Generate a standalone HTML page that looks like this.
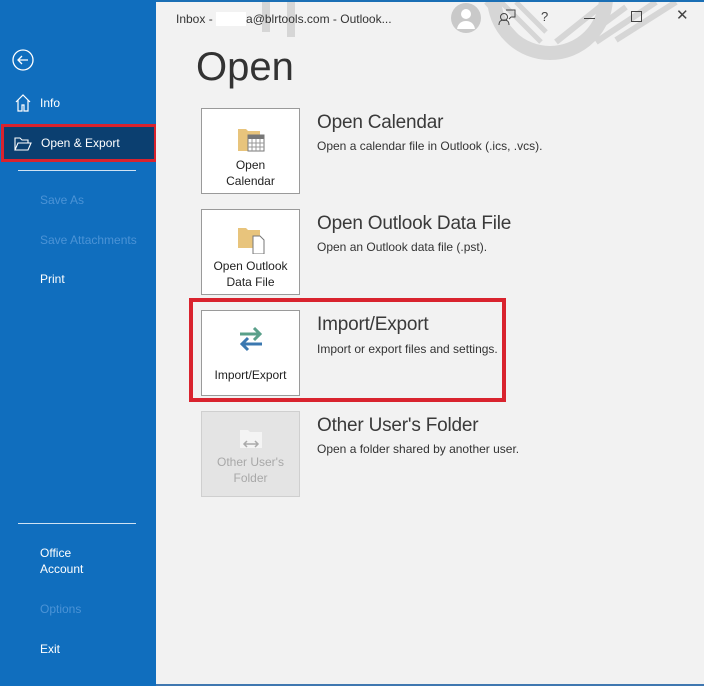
<!DOCTYPE html>
<html><head><style>
body{margin:0;width:704px;height:686px;overflow:hidden;font-family:"Liberation Sans",sans-serif;background:#f2f2f2;position:relative}
.side{position:absolute;left:0;top:0;width:156px;height:686px;background:#106ebe;color:#fff;font-size:12px}
.side div{position:absolute}
.main{position:absolute;left:156px;top:0;right:0;bottom:0;background:#f2f2f2;border-top:2px solid #1a6fb5;border-bottom:2px solid #3f77b0}
.tile{position:absolute;left:201px;width:97px;height:84px;background:#fff;border:1px solid #9a9a9a;font-size:12px;text-align:center;color:#222;line-height:16px}
.t{position:absolute;left:317px;font-size:19px;color:#3a3a3a;font-weight:300;letter-spacing:-0.2px}
.d{position:absolute;left:317px;font-size:12px;color:#333}
.g{color:#4b93d6}
</style></head><body>
<div class="side">
 <svg style="position:absolute;left:11px;top:48px" width="24" height="24"><circle cx="12" cy="12" r="10" fill="none" stroke="#fff" stroke-width="1.3"/><path d="M17 12H7M11 8l-4 4 4 4" fill="none" stroke="#fff" stroke-width="1.3"/></svg>
 <svg style="position:absolute;left:15px;top:94px" width="16" height="18"><path d="M1 8L8 1l7 7M3 6v11h4v-6h2v6h4V6" fill="none" stroke="#fff" stroke-width="1.2"/></svg>
 <div style="left:40px;top:96px">Info</div>
 <div style="top:124px;height:38px;background:#0b3f70;border:3px solid #d9232e;box-sizing:border-box;left:1px;width:156px"></div>
 <svg style="position:absolute;left:14px;top:137px" width="18" height="14"><path d="M1 13V1h5l2 2h6v3M1 13l3-7h13l-3 7z" fill="none" stroke="#fff" stroke-width="1.1"/></svg>
 <div style="left:41px;top:136px">Open &amp; Export</div>
 <div style="left:18px;top:170px;width:118px;height:1px;background:#cfe2f3"></div>
 <div class="g" style="left:40px;top:193px">Save As</div>
 <div class="g" style="left:40px;top:233px">Save Attachments</div>
 <div style="left:40px;top:272px">Print</div>
 <div style="left:18px;top:523px;width:118px;height:1px;background:#cfe2f3"></div>
 <div style="left:40px;top:545px;line-height:16px">Office<br>Account</div>
 <div class="g" style="left:40px;top:602px">Options</div>
 <div style="left:40px;top:642px">Exit</div>
</div>
<div class="main"></div>
<svg style="position:absolute;left:156px;top:2px" width="548" height="62"><g fill="none" stroke="#d6d6d6"><circle cx="394" cy="-5" r="56" stroke-width="14"/><path d="M330 0l40 45M345 0l40 40M360 0l30 30" stroke-width="5"/><path d="M400 40L450 0M420 42L470 5M440 40L500 0M460 38L520 0" stroke-width="6"/><path d="M110 0v30M135 0v35" stroke-width="8"/></g></svg>
<div style="position:absolute;left:176px;top:12px;font-size:12px;color:#333">Inbox - <span style="color:#fff;background:#fff">xxxxx</span>a@blrtools.com  -  Outlook...</div>
<svg style="position:absolute;left:450px;top:2px" width="32" height="32"><circle cx="16" cy="16" r="15" fill="#c9c9c9"/><circle cx="16" cy="12" r="5" fill="#fff"/><path d="M7 27c1-6 5-8 9-8s8 2 9 8z" fill="#fff"/></svg>
<svg style="position:absolute;left:498px;top:8px" width="18" height="18"><circle cx="6" cy="9" r="3.5" fill="none" stroke="#444"/><path d="M1 17c0-4 2-5 5-5s5 1 5 5M8 2h9v7h-4l-2 2" fill="none" stroke="#444"/></svg>
<div style="position:absolute;left:541px;top:9px;font-size:13px;color:#444">?</div>
<div style="position:absolute;left:584px;top:18px;width:11px;height:1px;background:#444"></div>
<div style="position:absolute;left:631px;top:11px;width:9px;height:9px;border:1px solid #444"></div>
<div style="position:absolute;left:676px;top:6px;font-size:15px;color:#444">✕</div>
<div style="position:absolute;left:196px;top:45px;font-size:40px;color:#333;font-weight:300">Open</div>

<div class="tile" style="top:108px"><svg style="margin-top:16px" width="30" height="28"><path d="M2 4h8l2 2h12v20H2z" fill="#e8c47c"/><rect x="12" y="10" width="16" height="16" fill="#fff" stroke="#777"/><rect x="12" y="10" width="16" height="4" fill="#777"/><path d="M16 14v12M20 14v12M24 14v12M12 18h16M12 22h16" stroke="#999"/></svg><br>Open<br>Calendar</div>
<div class="t" style="top:112px">Open Calendar</div>
<div class="d" style="top:139px">Open a calendar file in Outlook (.ics, .vcs).</div>

<div class="tile" style="top:209px"><svg style="margin-top:14px" width="30" height="30"><path d="M2 4h8l2 2h12v18H2z" fill="#e8c47c"/><path d="M17 12h7l4 4v14H17z" fill="#fff" stroke="#777"/></svg><br>Open Outlook<br>Data File</div>
<div class="t" style="top:213px">Open Outlook Data File</div>
<div class="d" style="top:240px">Open an Outlook data file (.pst).</div>

<div style="position:absolute;left:189px;top:298px;width:317px;height:104px;border:4px solid #d9232e;box-sizing:border-box"></div>
<div class="tile" style="top:310px"><svg style="margin-top:14px" width="30" height="28"><path d="M4 9h20M18 3l6 6-6 6" fill="none" stroke="#5aa08a" stroke-width="3"/><path d="M26 19H6M12 13l-6 6 6 6" fill="none" stroke="#3b78b0" stroke-width="3"/></svg><br><div style="margin-top:10px">Import/Export</div></div>
<div class="t" style="top:314px">Import/Export</div>
<div class="d" style="top:342px">Import or export files and settings.</div>

<div class="tile" style="top:411px;background:#e4e4e4;border-color:#cfcfcf;color:#a8a8a8"><svg style="margin-top:14px" width="30" height="24"><path d="M4 4h8l2 2h12v16H4z" fill="#f4f4f4"/><path d="M8 18h14M11 15l-3 3 3 3M19 15l3 3-3 3" fill="none" stroke="#aaa" stroke-width="1.5"/></svg><br>Other User's<br>Folder</div>
<div class="t" style="top:415px">Other User's Folder</div>
<div class="d" style="top:442px">Open a folder shared by another user.</div>
</body></html>
